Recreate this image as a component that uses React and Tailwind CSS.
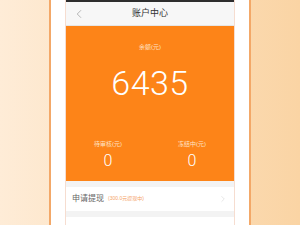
import React from "react";
import { ChevronLeft, ChevronRight } from "lucide-react";

const App = () => {
  return (
    <div
      className="w-[300px] h-[225px] overflow-hidden flex justify-center bg-gradient-to-r from-[#feecd7] to-[#fad4a4]"
      style={{ fontFamily: '"Liberation Sans", "Noto Sans CJK SC", sans-serif' }}
    >
      <div className="w-[202px] h-full bg-white border-x-2 border-[#f3a868] px-[14px] flex">
        <div className="flex-1 flex flex-col border-x border-[#f6ddd0] bg-[#f3f3f3] overflow-hidden">
          <div className="shrink-0 h-[2px] bg-[#2e2e2e]" />
          <div className="shrink-0 h-[24px] bg-[#f7f7f7] flex items-center relative border-b border-[#e6e6e6]">
            <ChevronLeft size={14} strokeWidth={1.2} className="text-[#9a9a9a] absolute left-[6px]" />
            <span className="flex-1 text-center text-[9px] text-[#333]">账户中心</span>
          </div>
          <div className="shrink-0 h-[155px] bg-[#fd8418] flex flex-col items-center pt-[17px] text-white">
            <span className="text-[6px] leading-[9px] text-[#ffe3c6]">余额(元)</span>
            <span className="mt-[14px] text-[34px] leading-[34px] font-light font-['Roboto',sans-serif] tracking-[0.5px]">6435</span>
            <div className="mt-[40px] w-full grid grid-cols-2">
              <div className="flex flex-col items-center">
                <span className="text-[6px] leading-[9px] text-[#ffe3c6]">待审核(元)</span>
                <span className="mt-[4px] text-[16px] leading-[16px] font-light font-['Roboto',sans-serif]">0</span>
              </div>
              <div className="flex flex-col items-center">
                <span className="text-[6px] leading-[9px] text-[#ffe3c6]">冻结中(元)</span>
                <span className="mt-[4px] text-[16px] leading-[16px] font-light font-['Roboto',sans-serif]">0</span>
              </div>
            </div>
          </div>
          <div className="shrink-0 mt-[6px] h-[24px] bg-white flex items-center px-[6px]">
            <span className="text-[8px] text-[#666]">申请提现</span>
            <span className="ml-[4px] text-[5px] text-[#f5a56a]">(300.0元提现中)</span>
            <ChevronRight size={10} strokeWidth={1.2} className="ml-auto text-[#cfcfcf]" />
          </div>
          <div className="shrink-0 mt-[6px] h-[24px] bg-white" />
        </div>
      </div>
    </div>
  );
};

export default App;
